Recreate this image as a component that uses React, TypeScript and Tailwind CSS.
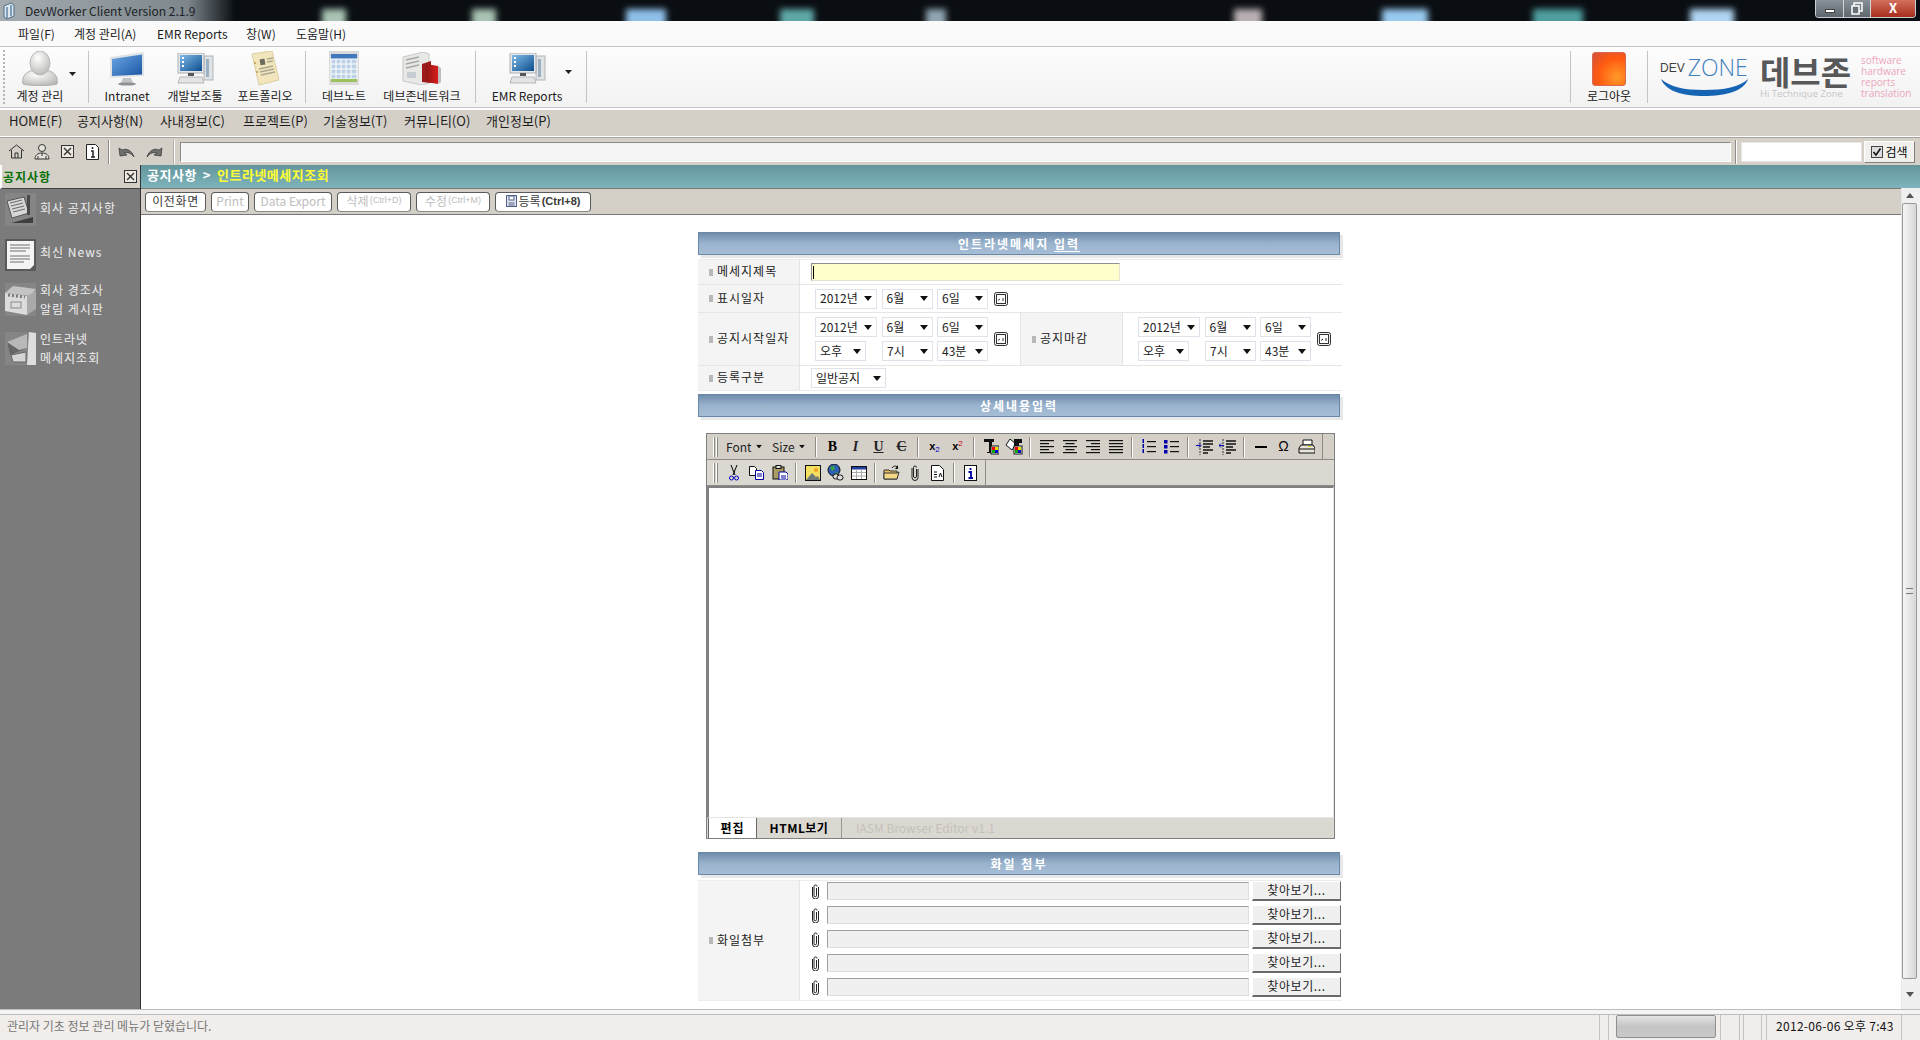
import type { ReactNode } from "react";

const menus = [
  { label: "파일(F)", w: "w-[56px]" },
  { label: "계정 관리(A)", w: "w-[83px]" },
  { label: "EMR Reports", w: "w-[89px]" },
  { label: "창(W)", w: "w-[50px]" },
  { label: "도움말(H)", w: "w-[60px]" },
];

const navs = [
  { label: "HOME(F)", w: "w-[68px]" },
  { label: "공지사항(N)", w: "w-[83px]" },
  { label: "사내정보(C)", w: "w-[83px]" },
  { label: "프로젝트(P)", w: "w-[80px]" },
  { label: "기술정보(T)", w: "w-[81px]" },
  { label: "커뮤니티(O)", w: "w-[82px]" },
  { label: "개인정보(P)", w: "w-[70px]" },
];

const blobs = [
  { x: 322, c: "#a9c4b4", w: 24 },
  { x: 472, c: "#a9c4b4", w: 24 },
  { x: 626, c: "#8fc0ea", w: 40 },
  { x: 780, c: "#5fa8a8", w: 34 },
  { x: 926, c: "#8fa5b0", w: 20 },
  { x: 1234, c: "#b9b0b4", w: 28 },
  { x: 1382, c: "#98c9ee", w: 46 },
  { x: 1533, c: "#4f9f9f", w: 50 },
  { x: 1690, c: "#b0d4f2", w: 44 },
];

function TitleBar() {
  return (
    <div className="relative flex h-[21px] w-full items-center overflow-hidden bg-[#0a0e12]">
      <svg className="absolute left-0 top-0" width="1920" height="21">
        <defs>
          <linearGradient id="titleLeft" x1="0" x2="1" y1="0" y2="0">
            <stop offset="0" stopColor="#a4acb0" />
            <stop offset="0.8" stopColor="#7d878c" />
            <stop offset="1" stopColor="#0a0e12" />
          </linearGradient>
          <filter id="blurA" x="-50%" y="-50%" width="200%" height="200%">
            <feGaussianBlur stdDeviation="3" />
          </filter>
        </defs>
        <rect width="235" height="21" fill="url(#titleLeft)" />
        {blobs.map((b) => (
          <rect key={b.x} x={b.x} y="9" width={b.w} height="20" fill={b.c} filter="url(#blurA)" />
        ))}
      </svg>
      <svg className="relative ml-[2px] mr-[9px]" width="14" height="18" viewBox="0 0 14 18">
        <path d="M2 4l7-3 3 2v11l-7 3-3-2z" fill="#dfe8ee" stroke="#4d6d86" />
        <path d="M5 5v11M9 3v11" stroke="#5d87a8" strokeWidth="1.5" />
      </svg>
      <span className="relative text-[12px] leading-[16px] text-[#1d2226]">DevWorker Client Version 2.1.9</span>
      <div className="ml-auto relative mr-[4px] mb-[4px] flex h-[18px] w-[101px] overflow-hidden rounded-b-[4px] border border-t-0 border-[#c9ced2]">
        <div className="flex w-[28px] items-center justify-center border-r border-[#d0d4d8] bg-gradient-to-b from-[#8a9299] to-[#5e666d]">
          <div className="mt-[5px] h-[4px] w-[10px] border border-[#444] bg-white" />
        </div>
        <div className="flex w-[27px] items-center justify-center border-r border-[#d0d4d8] bg-gradient-to-b from-[#8a9299] to-[#5e666d]">
          <svg width="12" height="13" viewBox="0 0 12 13">
            <rect x="3" y="1" width="8" height="8" fill="none" stroke="#fff" strokeWidth="1.5" />
            <rect x="1" y="4" width="7" height="8" fill="#6a7278" stroke="#fff" strokeWidth="1.5" />
          </svg>
        </div>
        <div className="flex flex-1 items-center justify-center bg-gradient-to-b from-[#d2705c] to-[#a82d1a] text-[13px] font-bold leading-[16px] text-white">
          X
        </div>
      </div>
    </div>
  );
}

function UserIcon() {
  return (
    <svg width="38" height="35" viewBox="0 0 38 35">
      <defs>
        <radialGradient id="ug" cx="0.4" cy="0.3" r="0.8">
          <stop offset="0" stopColor="#ffffff" />
          <stop offset="1" stopColor="#b4b4b0" />
        </radialGradient>
      </defs>
      <path d="M2 33c-2-9 5-13 11-14h12c6 1 13 5 11 14-4 2-30 2-34 0z" fill="url(#ug)" stroke="#b0b0ac" />
      <ellipse cx="19" cy="12" rx="10" ry="12" fill="url(#ug)" stroke="#b8b8b4" />
    </svg>
  );
}

function MonitorIcon() {
  return (
    <svg width="36" height="34" viewBox="0 0 36 34">
      <defs>
        <linearGradient id="mg" x1="0" x2="1" y1="0" y2="1">
          <stop offset="0" stopColor="#6aa7e2" />
          <stop offset="1" stopColor="#1c56a6" />
        </linearGradient>
      </defs>
      <path d="M1 5l34-5v24L1 26z" fill="#dfe3e6" />
      <path d="M3 7l30-4.5v20L3 24z" fill="url(#mg)" />
      <path d="M14 26h8l2 5H12z" fill="#bfc3c6" />
      <ellipse cx="18" cy="32" rx="9" ry="1.6" fill="#8c9094" />
    </svg>
  );
}

function PcIcon() {
  return (
    <svg width="37" height="31" viewBox="0 0 37 31">
      <defs>
        <linearGradient id="pg" x1="0" x2="1" y1="0" y2="1">
          <stop offset="0" stopColor="#7fbbe8" />
          <stop offset="1" stopColor="#0c4d8e" />
        </linearGradient>
      </defs>
      <rect x="27" y="3" width="9" height="24" fill="#dfe3e6" stroke="#b0b4b8" />
      <rect x="29" y="6" width="3" height="18" fill="#9bb0c0" />
      <rect x="1" y="0" width="26" height="20" fill="#e4e6e8" stroke="#aeb2b6" />
      <rect x="3" y="2" width="22" height="16" fill="url(#pg)" />
      <rect x="5" y="4" width="2" height="2" fill="#fff" />
      <rect x="5" y="8" width="2" height="2" fill="#fff" />
      <rect x="5" y="12" width="2" height="2" fill="#fff" />
      <rect x="11" y="20" width="6" height="3" fill="#55585c" />
      <path d="M3 24h22l2 6H1z" fill="#e2e4e6" stroke="#b4b6b8" />
    </svg>
  );
}

function PaperIcon() {
  return (
    <svg width="28" height="35" viewBox="0 0 28 35">
      <path d="M1 3l20-3 7 29-20 5z" fill="#f3e6bd" stroke="#dccd9f" />
      <rect x="9" y="8" width="5" height="6" transform="rotate(-10 11 11)" fill="#6b6b60" />
      <path d="M16 8l6-1M16 11l6-1M8 18l14-3M9 21l14-3M10 24l14-3" stroke="#a8a890" strokeWidth="1.4" />
      <circle cx="4" cy="12" r="1" fill="#c09a50" />
      <circle cx="6" cy="21" r="1" fill="#c09a50" />
    </svg>
  );
}

function CalendarIcon() {
  return (
    <svg width="32" height="35" viewBox="0 0 32 35">
      <rect x="1" y="0" width="30" height="34" fill="#dadbd8" />
      <rect x="3" y="3" width="26" height="5" fill="#3f76bc" />
      <g stroke="#fff" strokeWidth="1">
        <rect x="3" y="8" width="26" height="20" fill="#bcd0e6" />
        <path d="M3 13h26M3 18h26M3 23h26M8 8v20M13 8v20M18 8v20M23 8v20" />
      </g>
      <rect x="3" y="28" width="26" height="3" fill="#9cc25c" />
    </svg>
  );
}

function ServerIcon() {
  return (
    <svg width="40" height="33" viewBox="0 0 40 33">
      <defs>
        <linearGradient id="rg" x1="0" x2="1" y1="0" y2="0">
          <stop offset="0" stopColor="#8f1616" />
          <stop offset="1" stopColor="#d91c1c" />
        </linearGradient>
      </defs>
      <path d="M1 5l20-5 6 2v29l-7 2L1 29z" fill="#e8e8e6" stroke="#c8c8c6" />
      <path d="M4 8l13-3M4 12l13-3M4 16l13-3" stroke="#a8a8a6" strokeWidth="1.4" />
      <rect x="5" y="20" width="9" height="6" fill="#c6ced4" />
      <path d="M20 12l9-3v22l-9-1z" fill="#9c1a1a" />
      <path d="M24 12l12 2v18l-12-2z" fill="url(#rg)" />
      <path d="M36 14l3 2v14l-3 2z" fill="#bdbdbb" />
    </svg>
  );
}

function ToolItem({ w, icon, label, arrow }: { w: string; icon: ReactNode; label: string; arrow?: boolean }) {
  return (
    <div className={`${w} relative flex h-full flex-col items-center pt-[3px]`}>
      <div className="flex h-[37px] items-center justify-center">{icon}</div>
      <span className="mt-px text-[12px] leading-[16px] text-[#1c1c1c]">{label}</span>
      {arrow && (
        <svg className="absolute right-[6px] top-[23px]" width="7" height="4" viewBox="0 0 7 4">
          <path d="M0 0h7L3.5 4z" fill="#222" />
        </svg>
      )}
    </div>
  );
}

function ToolSep() {
  return <div className="my-[4px] w-px self-stretch bg-[#c4c4c4]" />;
}

function TopToolbar() {
  return (
    <div className="flex h-[62px] w-full border-y border-[#c6c6c6] bg-gradient-to-b from-[#fdfdfd] to-[#f2f2f2]">
      <div className="relative flex w-[88px]">
        <div className="my-[3px] ml-[3px] w-[2px] border-l-2 border-dotted border-[#b5b5b5]" />
        <ToolItem w="w-[70px]" icon={<UserIcon />} label="계정 관리" />
        <svg className="absolute left-[69px] top-[25px]" width="7" height="4" viewBox="0 0 7 4">
          <path d="M0 0h7L3.5 4z" fill="#222" />
        </svg>
      </div>
      <ToolSep />
      <ToolItem w="w-[76px]" icon={<MonitorIcon />} label="Intranet" />
      <ToolItem w="w-[60px]" icon={<PcIcon />} label="개발보조툴" />
      <ToolItem w="w-[80px]" icon={<PaperIcon />} label="포트폴리오" />
      <ToolSep />
      <ToolItem w="w-[76px]" icon={<CalendarIcon />} label="데브노트" />
      <ToolItem w="w-[80px]" icon={<ServerIcon />} label="데브존네트워크" />
      <div className="w-[13px]" />
      <ToolSep />
      <ToolItem w="w-[102px]" icon={<PcIcon />} label="EMR Reports" arrow />
      <div className="w-[8px]" />
      <ToolSep />
      <div className="flex-1" />
      <ToolSep />
      <div className="flex w-[76px] flex-col items-center pt-[5px]">
        <div className="h-[34px] w-[34px] rounded-[3px] border border-[#d86a50] bg-[radial-gradient(circle_at_75%_75%,#ff9a2a,#ff5a10_55%,#d4523c)]" />
        <span className="mt-[2px] text-[12px] leading-[16px] text-[#111]">로그아웃</span>
      </div>
      <ToolSep />
      <div className="flex w-[272px] pl-[12px]">
        <div className="flex w-[100px] flex-col pt-[9px]">
          <div className="flex items-center leading-none">
            <span className="font-['Liberation_Sans',sans-serif] text-[12px] text-[#3f3f3f]">DEV</span>
            <span className="ml-[3px] font-['Open_Sans',sans-serif] text-[23px] font-light text-[#3f80bc]">ZONE</span>
          </div>
          <svg className="-mt-[1px]" width="90" height="20" viewBox="0 0 90 20">
            <path d="M1 1C6 13 22 18 44 18S84 13 88 1C80 9 64 12 44 12S10 9 1 1z" fill="#1565b4" />
          </svg>
        </div>
        <div className="flex w-[101px] flex-col">
          <span className="mt-[8px] h-[32px] text-[33px] font-bold leading-[32px] text-[#57585a]">데브존</span>
          <span className="font-['Open_Sans',sans-serif] text-[9.5px] leading-[14px] text-[#c6c6c6]">Hi Technique Zone</span>
        </div>
        <div className="flex flex-col pt-[8px] font-['Open_Sans',sans-serif] text-[10px] leading-[11px] text-[#eea6bd]">
          <span>software</span>
          <span>hardware</span>
          <span>reports</span>
          <span>translation</span>
        </div>
      </div>
    </div>
  );
}

function IconBarIcon({ name }: { name: string }) {
  if (name === "home")
    return (
      <svg width="17" height="17" viewBox="0 0 17 17" fill="none" stroke="#333">
        <path d="M1 8l7.5-6L16 8M3.5 7v8h10V7M7 15v-5h3v5" />
      </svg>
    );
  if (name === "people")
    return (
      <svg width="18" height="18" viewBox="0 0 18 18" fill="#e6e3dc" stroke="#333">
        <circle cx="9" cy="5" r="3.5" />
        <path d="M2 16c0-4 3-6 7-6s7 2 7 6z" />
        <path d="M5 16v-3M13 16v-3M9 10v3" />
      </svg>
    );
  if (name === "close")
    return (
      <svg width="13" height="13" viewBox="0 0 13 13" fill="#eeeae2" stroke="#333">
        <rect x="0.5" y="0.5" width="12" height="12" />
        <path d="M3 3l7 7M10 3l-7 7" strokeWidth="1.4" />
      </svg>
    );
  if (name === "info")
    return (
      <svg width="13" height="16" viewBox="0 0 13 16" fill="#fff" stroke="#222">
        <path d="M.5.5h9l3 3v12H.5z" />
        <path d="M6.5 3v2M5 7h2v6M5 13h4" strokeWidth="1.5" fill="none" />
      </svg>
    );
  if (name === "undo")
    return (
      <svg width="17" height="12" viewBox="0 0 17 12">
        <path d="M16 11C14 4 8 2 4 4L1 2l1 8 7-1-3-2c4-1 7 0 10 4z" fill="#6e6e6e" stroke="#333" strokeWidth="0.7" />
      </svg>
    );
  return (
    <svg width="17" height="12" viewBox="0 0 17 12">
      <path d="M1 11C3 4 9 2 13 4l3-2-1 8-7-1 3-2C7 6 4 7 1 11z" fill="#6e6e6e" stroke="#333" strokeWidth="0.7" />
    </svg>
  );
}

function IconCell({ w, name }: { w: string; name: string }) {
  return (
    <div className={`${w} flex items-center justify-center`}>
      <IconBarIcon name={name} />
    </div>
  );
}

function IconBar() {
  return (
    <div className="flex h-[27px] w-full items-center bg-[#d4d0c8]">
      <IconCell w="ml-[3px] w-[26px]" name="home" />
      <IconCell w="w-[26px]" name="people" />
      <IconCell w="w-[25px]" name="close" />
      <IconCell w="w-[25px]" name="info" />
      <div className="mx-[3px] h-[24px] w-[2px] border-x border-l-[#8c8c8c] border-r-white" />
      <IconCell w="w-[27px]" name="undo" />
      <IconCell w="w-[28px]" name="redo" />
      <div className="ml-[5px] mr-[5px] h-[24px] w-[2px] border-x border-l-[#b0aca4] border-r-white" />
      <div className="h-[20px] w-[1551px] border border-b-white border-l-[#8a8a8a] border-r-white border-t-[#8a8a8a] bg-[#f5f5f5]" />
      <div className="mx-[4px] h-[24px] w-[2px] border-x border-l-[#8c8c8c] border-r-white" />
      <div className="h-[20px] w-[121px] border border-[#e6e6e6] bg-white" />
      <div className="ml-[2px] flex h-[22px] w-[51px] items-center justify-center gap-[2px] border border-b-[#808080] border-l-white border-r-[#808080] border-t-white bg-[#f2f0ec] text-[12px] text-black">
        <svg width="12" height="12" viewBox="0 0 12 12">
          <rect x="0.5" y="0.5" width="11" height="11" fill="#ddd" stroke="#444" />
          <path d="M2.5 6l2.5 3 4.5-6.5" fill="none" stroke="#111" strokeWidth="1.6" />
        </svg>
        검색
      </div>
    </div>
  );
}

function SideArt({ kind }: { kind: number }) {
  if (kind === 0)
    return (
      <svg width="31" height="33" viewBox="0 0 31 33">
        <rect width="31" height="33" fill="#858585" />
        <path d="M2 8l17-4 5 16-17 5z" fill="#d6d6d6" stroke="#555" />
        <path d="M5 10l12-3M6 13l12-3M7 16l12-3M8 19l12-3" stroke="#6a6a6a" />
        <rect x="22" y="2" width="3" height="20" fill="#4a4a4a" />
        <path d="M6 30l22-6v6z" fill="#3f3f3f" />
      </svg>
    );
  if (kind === 1)
    return (
      <svg width="31" height="32" viewBox="0 0 31 32">
        <rect width="31" height="32" fill="#5a5a5a" />
        <path d="M2 2h27v24l-4 4H2z" fill="#f4f4f4" />
        <path d="M5 6h20M5 9h20M5 12h16M5 17h20M5 20h20M5 23h14" stroke="#9a9a9a" strokeWidth="1.3" />
      </svg>
    );
  if (kind === 2)
    return (
      <svg width="31" height="33" viewBox="0 0 31 33">
        <rect width="31" height="33" fill="#858585" />
        <path d="M0 10l8-7 23 3-5 7z" fill="#c4c4c4" />
        <path d="M0 10l22 3v19L0 28z" fill="#dcdcdc" />
        <path d="M22 13l9-5v18l-9 6z" fill="#aaaaaa" />
        <path d="M3 12l17 2" stroke="#777" strokeWidth="3" strokeDasharray="2 2" />
        <rect x="6" y="19" width="10" height="6" fill="none" stroke="#8a8a8a" />
      </svg>
    );
  return (
    <svg width="31" height="33" viewBox="0 0 31 33">
      <rect width="31" height="33" fill="#858585" />
      <path d="M24 0l7 1v32h-9z" fill="#dedede" />
      <path d="M2 10L22 2v14L5 22z" fill="#b8b8b8" />
      <path d="M2 10l12 8 8-2-17 7z" fill="#666" />
      <path d="M6 23l15-3v10H8z" fill="#d4d4d4" stroke="#666" />
    </svg>
  );
}

function SideItem({ kind, mt, pb, lines }: { kind: number; mt: string; pb: string; lines: string[] }) {
  return (
    <div className={`${mt} flex h-[33px] items-center pl-[5px]`}>
      <SideArt kind={kind} />
      <div className={`${pb} ml-[4px] text-[12px] leading-[19px] tracking-[1px] text-[#eeeeee]`}>
        {lines.map((l) => (
          <div key={l}>{l}</div>
        ))}
      </div>
    </div>
  );
}

function Sidebar() {
  return (
    <aside className="flex w-[141px] shrink-0 flex-col border-r border-[#333] bg-[#7b7b7b]">
      <div className="flex h-[24px] items-center justify-between border-b border-[#444] border-l-2 border-l-white bg-[#d4d0c8] pl-[1px] pr-[3px]">
        <span className="text-[12px] font-bold tracking-[1px] text-[#067006]">공지사항</span>
        <IconBarIcon name="close" />
      </div>
      <SideItem kind={0} mt="mt-[4px]" pb="pb-[5px]" lines={["회사 공지사항"]} />
      <SideItem kind={1} mt="mt-[12px]" pb="pb-[7px]" lines={["최신 News"]} />
      <SideItem kind={2} mt="mt-[12px]" pb="pb-[1px]" lines={["회사 경조사", "알림 게시판"]} />
      <SideItem kind={3} mt="mt-[16px]" pb="pb-[1px]" lines={["인트라넷", "메세지조회"]} />
    </aside>
  );
}

function ActBtn({ w, off, children }: { w: string; off?: boolean; children: ReactNode }) {
  return (
    <div
      className={`${w} flex h-[20px] items-center justify-center rounded-[4px] border border-[#5a5a5a] border-b-[#8a8a8a] bg-white pb-px text-[12px] ${
        off ? "text-[#bdbdbd]" : "text-[#3a3a3a]"
      }`}
    >
      {children}
    </div>
  );
}

function Caret({ cls }: { cls: string }) {
  return (
    <svg className={cls} width="8" height="5" viewBox="0 0 8 5">
      <path d="M0 0h8L4 5z" fill="#111" />
    </svg>
  );
}

function Sel({ w, text }: { w: string; text: string }) {
  return (
    <div className={`${w} flex h-[20px] items-center justify-between border border-[#dfe2ea] bg-white pl-[4px] pr-[4px] text-[12px] text-[#222]`}>
      <span className="pb-px">{text}</span>
      <Caret cls="" />
    </div>
  );
}

function CalBtn() {
  return (
    <svg className="ml-[6px]" width="14" height="14" viewBox="0 0 14 14">
      <rect x="0.5" y="0.5" width="13" height="13" rx="2" fill="#f0f0f0" stroke="#333" />
      <rect x="2.5" y="2.5" width="9" height="9" fill="#fff" stroke="#333" />
      <path d="M4 8.500L6 7M9 6v3" stroke="#333" />
    </svg>
  );
}

function DateRow() {
  return (
    <div className="flex gap-[4.500px]">
      <Sel w="w-[62px]" text="2012년" />
      <Sel w="w-[51px]" text="6월" />
      <Sel w="w-[51px]" text="6일" />
    </div>
  );
}

function TimeRow() {
  return (
    <div className="flex">
      <Sel w="w-[51px] mr-[16px]" text="오후" />
      <Sel w="w-[51px] mr-[4px]" text="7시" />
      <Sel w="w-[51px]" text="43분" />
    </div>
  );
}

function DateTime() {
  return (
    <div className="flex items-center">
      <div className="flex flex-col gap-[4px]">
        <DateRow />
        <TimeRow />
      </div>
      <CalBtn />
    </div>
  );
}

function Label({ text, w }: { text: string; w: string }) {
  return (
    <div className={`${w} flex shrink-0 items-center gap-[4px] self-stretch border-r border-[#e4e4e4] bg-[#f4f4f4] pl-[11px] text-[12px] tracking-[1px] text-[#222]`}>
      <span className="h-[7px] w-[4px] bg-[#b8b8b8]" />
      <span className="pb-[2px]">{text}</span>
    </div>
  );
}

function Heading({ children, mt }: { children: ReactNode; mt: string }) {
  return (
    <div className={`${mt} flex h-[23px] w-[642px] items-center justify-center border border-[#6b87a6] bg-gradient-to-b from-[#6f8dac] via-[#9ab3cd] to-[#a6bdd6] text-[12px] font-bold tracking-[2px] text-white shadow-[3px_3px_0_#e6e8ea]`}>
      {children}
    </div>
  );
}

function Ed({ children }: { children: ReactNode }) {
  return <div className="flex w-[23px] items-center justify-center">{children}</div>;
}

function EdSep() {
  return (
    <div className="flex w-[10px] justify-center">
      <div className="h-[20px] w-[2px] border-x border-l-[#8e8b84] border-r-white" />
    </div>
  );
}

function Grip() {
  return (
    <div className="flex w-[15px] justify-center gap-[1px] pl-[1px]">
      <div className="h-[20px] w-[2px] border-x border-l-white border-r-[#8e8b84]" />
      <div className="h-[20px] w-[2px] border-x border-l-white border-r-[#8e8b84]" />
    </div>
  );
}

function AlignIcon({ kind }: { kind: string }) {
  const rows = [0, 1, 2, 3, 4];
  const lens = kind === "justify" ? [14, 14, 14, 14, 14] : [14, 9, 14, 9, 14];
  return (
    <svg width="14" height="14" viewBox="0 0 14 14">
      {rows.map((r) => {
        const len = lens[r];
        const x = kind === "left" || kind === "justify" ? 0 : kind === "right" ? 14 - len : (14 - len) / 2;
        return <rect key={r} x={x} y={r * 3} width={len} height="1.2" fill="#111" />;
      })}
    </svg>
  );
}

function ListIcon({ ordered }: { ordered?: boolean }) {
  return (
    <svg width="15" height="15" viewBox="0 0 15 15">
      {[0, 1, 2].map((i) =>
        ordered ? (
          <rect key={i} x="1.500" y={i * 5} width="1.500" height="4" fill="#0000a8" />
        ) : (
          <rect key={i} x="0" y={i * 5 + 1} width="3.500" height="3.500" fill="#0000a8" />
        ),
      )}
      {[2, 7, 12].map((y) => (
        <rect key={y} x="6" y={y} width="9" height="1.200" fill="#111" />
      ))}
    </svg>
  );
}

function IndentIcon({ out }: { out?: boolean }) {
  return (
    <svg width="17" height="16" viewBox="0 0 17 16">
      <path d="M4 0v16" stroke="#333" strokeDasharray="2 1" />
      <path d={out ? "M0 6.500h5M0 6.500l2-2M0 6.500l2 2" : "M0 6.500h4M5 6.500l-2-2M5 6.500l-2 2"} stroke="#0000a8" fill="none" />
      <path d="M7 2h10M7 5h10M7 8h7M7 11h10M7 14h5" stroke="#111" strokeWidth="1.300" />
    </svg>
  );
}

function EditorToolbar() {
  return (
    <div className="flex h-[52px] flex-col">
      <div className="flex h-[26px] items-center border-b border-[#8e8b84] bg-[#d4d0c8]">
        <Grip />
        <div className="flex w-[45px] items-center gap-[3px] pl-[4px] text-[12px] text-[#222]">
          Font
          <Caret cls="scale-75" />
        </div>
        <div className="flex w-[44px] items-center gap-[3px] pl-[5px] text-[12px] text-[#222]">
          Size
          <Caret cls="scale-75" />
        </div>
        <EdSep />
        <Ed><span className="font-['Liberation_Serif',serif] text-[14px] font-bold text-black">B</span></Ed>
        <Ed><span className="font-['Liberation_Serif',serif] text-[14px] font-bold italic text-[#222]">I</span></Ed>
        <Ed><span className="font-['Liberation_Serif',serif] text-[14px] font-bold text-[#222] underline">U</span></Ed>
        <Ed><span className="font-['Liberation_Serif',serif] text-[14px] font-bold text-[#222] line-through">C</span></Ed>
        <EdSep />
        <Ed>
          <span className="font-['Liberation_Sans',sans-serif] text-[11px] font-bold text-black">
            x<sub className="text-[8px] font-normal text-[#0000c0]">2</sub>
          </span>
        </Ed>
        <Ed>
          <span className="font-['Liberation_Sans',sans-serif] text-[11px] font-bold text-black">
            x<sup className="text-[8px] font-normal text-[#d00000]">2</sup>
          </span>
        </Ed>
        <EdSep />
        <Ed>
          <svg width="16" height="17" viewBox="0 0 16 17">
            <path d="M1 1h10v3H9v10h2v1H4v-1h2V4H3v0H1z" fill="#111" />
            <rect x="8" y="8" width="8" height="8" fill="#fff" stroke="#111" />
            <rect x="9" y="9" width="3" height="3" fill="#e00" />
            <rect x="12" y="9" width="3" height="3" fill="#dd0" />
            <rect x="9" y="12" width="3" height="3" fill="#0a0" />
            <rect x="12" y="12" width="3" height="3" fill="#00c" />
          </svg>
        </Ed>
        <Ed>
          <svg width="18" height="17" viewBox="0 0 18 17">
            <path d="M5 1L1 7l6 5 4-6z" fill="#fff" stroke="#111" />
            <path d="M9 1h8v4h-3v3H9z" fill="#111" />
            <rect x="9" y="8" width="8" height="8" fill="#fff" stroke="#111" />
            <rect x="10" y="9" width="3" height="3" fill="#e00" />
            <rect x="13" y="9" width="3" height="3" fill="#dd0" />
            <rect x="10" y="12" width="3" height="3" fill="#0a0" />
            <rect x="13" y="12" width="3" height="3" fill="#00c" />
          </svg>
        </Ed>
        <EdSep />
        <Ed><AlignIcon kind="left" /></Ed>
        <Ed><AlignIcon kind="center" /></Ed>
        <Ed><AlignIcon kind="right" /></Ed>
        <Ed><AlignIcon kind="justify" /></Ed>
        <EdSep />
        <Ed><ListIcon ordered /></Ed>
        <Ed><ListIcon /></Ed>
        <EdSep />
        <Ed><IndentIcon /></Ed>
        <Ed><IndentIcon out /></Ed>
        <EdSep />
        <Ed><div className="h-[2px] w-[12px] bg-black" /></Ed>
        <Ed><span className="font-['Liberation_Sans',sans-serif] text-[14px] text-black">Ω</span></Ed>
        <Ed>
          <svg width="17" height="16" viewBox="0 0 17 16" fill="#e8e4dc" stroke="#111">
            <path d="M5 1h9v5H5z" fill="#fff" />
            <path d="M3 6h12l2 3v5H1V9z" />
            <path d="M1 10h16" />
            <rect x="10" y="7" width="3" height="1" fill="#dd0" stroke="none" />
          </svg>
        </Ed>
        <div className="ml-auto mr-[11px] h-full w-px bg-[#8e8b84]" />
      </div>
      <div className="flex h-[26px] items-center border-b border-[#8e8b84] bg-[#dbd8d1]">
        <Grip />
        <Ed>
          <svg width="10" height="16" viewBox="0 0 10 16" fill="none" stroke="#000">
            <path d="M2 0l4 10M8 0L4 10" />
            <circle cx="2.500" cy="13" r="2" stroke="#0000c0" />
            <circle cx="7.500" cy="13" r="2" stroke="#0000c0" />
          </svg>
        </Ed>
        <Ed>
          <svg width="15" height="14" viewBox="0 0 15 14" fill="#fff" stroke="#0000a0">
            <path d="M.5.5h5l2 2v7H.5z" stroke="#111" />
            <path d="M6.500 4.500h6l2 2v7h-8z" />
            <path d="M8 8h5M8 10h5" />
          </svg>
        </Ed>
        <Ed>
          <svg width="16" height="15" viewBox="0 0 16 15">
            <rect x="1" y="2" width="11" height="12" fill="#a89c62" stroke="#111" />
            <rect x="4" y="0.500" width="5" height="3" fill="#ddd" stroke="#111" />
            <path d="M7 7h7l2 2v6H7z" fill="#fff" stroke="#0000a0" />
            <path d="M9 11h5M9 13h5" stroke="#0000a0" />
          </svg>
        </Ed>
        <EdSep />
        <Ed>
          <svg width="16" height="16" viewBox="0 0 16 16">
            <rect x="0.500" y="0.500" width="15" height="15" fill="#f4e060" stroke="#111" />
            <circle cx="11" cy="5" r="2" fill="#f0a020" />
            <path d="M1 15l6-7 4 4 2-1 2 4z" fill="#707878" />
          </svg>
        </Ed>
        <Ed>
          <svg width="17" height="17" viewBox="0 0 17 17">
            <circle cx="7" cy="6" r="6" fill="#2d5fb4" stroke="#111" />
            <path d="M3 3l4-1 1 3-3 2zM8 8l3 1-2 2z" fill="#3aa040" />
            <rect x="6" y="10" width="6" height="5" rx="2.500" fill="#ddd" stroke="#111" />
            <rect x="10" y="11" width="6" height="5" rx="2.500" fill="#ddd" stroke="#111" />
          </svg>
        </Ed>
        <Ed>
          <svg width="16" height="14" viewBox="0 0 16 14">
            <rect x="0.500" y="0.500" width="15" height="13" fill="#fff" stroke="#111" />
            <rect x="1" y="1" width="14" height="2.500" fill="#2040a0" />
            <path d="M1 6.500h14M1 10h14M5.500 3v10M10.500 3v10" stroke="#aaa" />
          </svg>
        </Ed>
        <EdSep />
        <Ed>
          <svg width="17" height="15" viewBox="0 0 17 15">
            <path d="M1 5h5l1 1h7v8H1z" fill="#e8c060" stroke="#333" />
            <path d="M1 8h13l2-1-2 7H1z" fill="#f4d888" stroke="#333" />
            <path d="M9 3c2-3 5-2 6 0" fill="none" stroke="#111" />
            <path d="M15 0v4h-3z" fill="#111" />
          </svg>
        </Ed>
        <Ed>
          <svg width="8" height="16" viewBox="0 0 8 16" fill="none" stroke="#222">
            <path d="M5.500 4v8a2 2 0 0 1-3 0V2.500a1.500 1.500 0 0 1 3 0" />
            <path d="M7 4v8.500a3 3 0 0 1-6 0V3" />
          </svg>
        </Ed>
        <Ed>
          <svg width="13" height="16" viewBox="0 0 13 16" fill="#fff" stroke="#111">
            <path d="M.5.5h8l4 4v11H.5z" />
            <path d="M3 7h3M3 9.500h3M3 12h3" />
            <path d="M8 12l1.500-4L11 12" fill="none" />
          </svg>
        </Ed>
        <EdSep />
        <Ed>
          <svg width="13" height="16" viewBox="0 0 13 16" fill="#fff" stroke="#0000a0">
            <rect x="0.500" y="0.500" width="12" height="15" stroke="#111" />
            <path d="M6.500 3v2M4.500 7h2.500v6M4.500 13h4.500" strokeWidth="1.800" fill="none" />
          </svg>
        </Ed>
        <div className="ml-[3px] h-full w-px bg-[#8e8b84]" />
      </div>
    </div>
  );
}

function Editor() {
  return (
    <div className="ml-[8px] mt-[16px] flex h-[406px] w-[629px] flex-col border border-[#808080] bg-[#dbd8d1]">
      <EditorToolbar />
      <div className="flex-1 border-b border-l-2 border-r border-t-2 border-b-[#e4e4e4] border-l-[#808080] border-r-[#e4e4e4] border-t-[#808080] bg-white" />
      <div className="flex h-[20px] items-stretch text-[12px]">
        <div className="ml-[1px] flex w-[49px] items-center justify-center border-x border-x-[#666] bg-white font-bold tracking-[1px] text-black">
          편집
        </div>
        <div className="flex w-[85px] items-center justify-center border-r border-[#999] font-bold tracking-[0.5px] text-black">HTML보기</div>
        <span className="ml-[14px] flex items-center text-[#c4c1bb]">IASM Browser Editor v1.1</span>
      </div>
    </div>
  );
}

function FileRow() {
  return (
    <div className="flex h-[20px] items-center">
      <svg className="ml-[12px] mr-[8px]" width="7" height="15" viewBox="0 0 7 15" fill="none" stroke="#222">
        <path d="M4.500 4v7.500a1.200 1.200 0 0 1-2.500 0V2.500a1.500 1.500 0 0 1 3 0" />
        <path d="M6.500 3v9a3 3 0 0 1-6 0V3" />
      </svg>
      <div className="h-[18px] w-[422px] border border-b-[#dedede] border-l-[#a0a0a0] border-r-[#dedede] border-t-[#a0a0a0] bg-[#f0f0f0]" />
      <div className="ml-[3px] flex h-[20px] w-[89px] items-center justify-center border border-b-2 border-b-[#6a6a6a] border-l-white border-r-[#6a6a6a] border-t-white bg-[#f0f0f0] pb-[2px] text-[12px] tracking-[0.6px] text-[#222]">
        찾아보기...
      </div>
    </div>
  );
}

function Form() {
  return (
    <div className="ml-[557px] w-[644px] pt-[17px]">
      <Heading mt="">
        <span>
          인트라넷메세지 <span className="underline underline-offset-2">입력</span>
        </span>
      </Heading>
      <div className="mt-[4px] border-b border-t border-[#ececec] border-r-[#ececec]">
        <div className="flex h-[25px] items-center border-b border-[#e6e6e6]">
          <Label w="w-[102px]" text="메세지제목" />
          <div className="ml-[11px] flex h-[18px] w-[309px] items-center border border-b-[#e4e4d0] border-l-[#909090] border-r-[#e4e4d0] border-t-[#909090] bg-[#ffffcc] pl-[1px]">
            <div className="h-[13px] w-px bg-black" />
          </div>
        </div>
        <div className="flex h-[28px] items-center border-b border-[#e6e6e6]">
          <Label w="w-[102px]" text="표시일자" />
          <div className="ml-[15px] flex items-center">
            <DateRow />
            <CalBtn />
          </div>
        </div>
        <div className="flex h-[53px] items-center border-b border-[#e6e6e6]">
          <Label w="w-[102px]" text="공지시작일자" />
          <div className="ml-[15px] w-[205px]">
            <DateTime />
          </div>
          <Label w="w-[103px] border-l" text="공지마감" />
          <div className="ml-[15px]">
            <DateTime />
          </div>
        </div>
        <div className="flex h-[24px] items-center">
          <Label w="w-[102px]" text="등록구분" />
          <Sel w="ml-[11px] w-[75px]" text="일반공지" />
        </div>
      </div>
      <Heading mt="mt-[3px]">상세내용입력</Heading>
      <Editor />
      <Heading mt="mt-[13px]">화일 첨부</Heading>
      <div className="mt-[5px] flex h-[121px] items-center border-y border-[#ececec]">
        <Label w="w-[102px]" text="화일첨부" />
        <div className="mb-[3px] flex flex-col gap-[4px]">
          <FileRow />
          <FileRow />
          <FileRow />
          <FileRow />
          <FileRow />
        </div>
      </div>
    </div>
  );
}

function Scrollbar() {
  return (
    <div className="flex h-full w-[19px] shrink-0 flex-col border-l border-[#e8e8e8] bg-[#f0f0f0] pr-[3px]">
      <div className="flex h-[15px] items-center justify-center">
        <svg width="8" height="5" viewBox="0 0 8 5">
          <path d="M0 5h8L4 0z" fill="#555" />
        </svg>
      </div>
      <div className="flex flex-1 items-center justify-center rounded-[2px] border border-[#9a9a9a] bg-gradient-to-r from-[#f6f6f6] to-[#d6d6d6]">
        <div className="h-[6px] w-[7px] border-y border-[#777]" />
      </div>
      <div className="flex h-[30px] items-center justify-center">
        <svg width="8" height="5" viewBox="0 0 8 5">
          <path d="M0 0h8L4 5z" fill="#555" />
        </svg>
      </div>
    </div>
  );
}

function StatusBar() {
  return (
    <div className="flex h-[31px] w-full flex-col">
      <div className="h-[6px] border-y border-[#bdbdbd] bg-[#f4f4f4]" />
      <div className="flex h-[25px] items-stretch bg-[#f0edeb] text-[12px]">
        <div className="flex w-[1600px] items-center border-r border-[#c4c4c4] pb-[3px] pl-[7px] text-[#777]">
          관리자 기초 정보 관리 메뉴가 닫혔습니다.
        </div>
        <div className="ml-[8px] w-[8px] border-l border-[#c4c4c4]" />
        <div className="mb-[2px] h-[23px] w-[100px] rounded-[2px] border border-[#8f8f8f] bg-gradient-to-b from-[#e4e4e4] via-[#c4c4c4] to-[#c8c8c8]" />
        <div className="ml-[4px] w-[20px] border-x border-[#c4c4c4]" />
        <div className="ml-[3px] w-[19px] border-x border-[#c4c4c4]" />
        <div className="ml-[4px] flex w-[136px] items-center border-x border-[#c4c4c4] pb-[3px] pl-[9px] tracking-[0.3px] text-[#111]">
          2012-06-06 오후 7:43
        </div>
      </div>
    </div>
  );
}

export default function App() {
  return (
    <div className="flex h-[1040px] w-[1920px] flex-col overflow-hidden bg-white font-['Noto_Sans_CJK_KR',sans-serif]">
      <TitleBar />
      <div className="flex h-[25px] w-full items-center bg-[#fafafa] pl-[18px] text-[12px] text-[#1c1c1c]">
        {menus.map((m) => (
          <span key={m.label} className={m.w}>
            {m.label}
          </span>
        ))}
      </div>
      <TopToolbar />
      <div className="mt-[2px] flex h-[26px] w-full items-center bg-[#d4d0c8] pb-[4px] pl-[9px] text-[13px] text-[#1c1c1c]">
        {navs.map((n) => (
          <span key={n.label} className={n.w}>
            {n.label}
          </span>
        ))}
      </div>
      <div className="h-[2px] border-b border-[#a8a49c] bg-white" />
      <IconBar />
      <div className="flex h-[844px] w-full">
        <Sidebar />
        <div className="flex min-w-0 flex-1 flex-col">
          <div className="flex h-[23px] items-center bg-gradient-to-b from-[#62969b] to-[#80b4bd] pb-[3px] pl-[6px] text-[13px] font-bold tracking-[0.5px] text-white">
            공지사항<span className="mx-[6px]">&gt;</span>
            <span className="text-[#ffff33]">인트라넷메세지조회</span>
          </div>
          <div className="flex min-h-0 flex-1">
            <div className="flex min-w-0 flex-1 flex-col">
              <div className="flex h-[27px] shrink-0 items-center gap-[5px] border-b border-t border-b-[#777] border-t-[#777] bg-[#d4d0c8] pl-[4px]">
                <ActBtn w="w-[61px]"><span className="tracking-[0.6px]">이전화면</span></ActBtn>
                <ActBtn w="w-[38px]" off>Print</ActBtn>
                <ActBtn w="w-[78px]" off>Data Export</ActBtn>
                <ActBtn w="w-[74px]" off>
                  삭제<span className="ml-[1px] font-['Liberation_Sans',sans-serif] text-[9px]">(Ctrl+D)</span>
                </ActBtn>
                <ActBtn w="w-[74px]" off>
                  수정<span className="ml-[1px] font-['Liberation_Sans',sans-serif] text-[9px]">(Ctrl+M)</span>
                </ActBtn>
                <ActBtn w="w-[96px]">
                  <svg className="mr-[2px]" width="11" height="12" viewBox="0 0 11 12">
                    <rect x="0.500" y="0.500" width="10" height="11" fill="#dfe4f0" stroke="#50608a" />
                    <rect x="3" y="1" width="5" height="4" fill="#fff" stroke="#50608a" />
                    <path d="M2.500 8h6M2.500 10h6" stroke="#50608a" />
                  </svg>
                  등록
                  <span className="ml-[1px] font-['Liberation_Sans',sans-serif] text-[11px] font-bold">(Ctrl+8)</span>
                </ActBtn>
              </div>
              <div className="min-h-0 flex-1 overflow-hidden">
                <Form />
              </div>
            </div>
            <Scrollbar />
          </div>
        </div>
      </div>
      <StatusBar />
    </div>
  );
}
